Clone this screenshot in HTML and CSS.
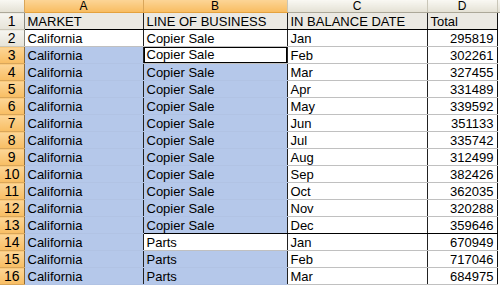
FILE: index.html
```html
<!DOCTYPE html>
<html lang="en">
<head>
    <meta charset="UTF-8">
    <title>Sheet</title>
    <link rel="stylesheet" href="styles.css">
</head>
<body>
    <table class="sheet">
        <colgroup>
            <col class="c-row">
            <col class="c-a">
            <col class="c-b">
            <col class="c-c">
            <col class="c-d">
            <col class="c-rest">
        </colgroup>
        <tr class="colhead">
            <th class="corner"></th>
            <th class="sel">A</th>
            <th class="sel">B</th>
            <th>C</th>
            <th>D</th>
            <th class="rest"></th>
        </tr>
        <tr class="title">
            <th class="rh">1</th>
            <td class="a">MARKET</td>
            <td class="b">LINE OF BUSINESS</td>
            <td class="c">IN BALANCE DATE</td>
            <td class="d txt">Total</td>
            <td class="rest"></td>
        </tr>
        <tr>
            <th class="rh">2</th>
            <td class="a">California</td>
            <td class="b">Copier Sale</td>
            <td class="c">Jan</td>
            <td class="d">295819</td>
            <td class="rest"></td>
        </tr>
        <tr>
            <th class="rh sel">3</th>
            <td class="a hi">California</td>
            <td class="b active"><span>Copier Sale</span></td>
            <td class="c">Feb</td>
            <td class="d">302261</td>
            <td class="rest"></td>
        </tr>
        <tr>
            <th class="rh sel">4</th>
            <td class="a hi">California</td>
            <td class="b hi">Copier Sale</td>
            <td class="c">Mar</td>
            <td class="d">327455</td>
            <td class="rest"></td>
        </tr>
        <tr>
            <th class="rh sel">5</th>
            <td class="a hi">California</td>
            <td class="b hi">Copier Sale</td>
            <td class="c">Apr</td>
            <td class="d">331489</td>
            <td class="rest"></td>
        </tr>
        <tr>
            <th class="rh sel">6</th>
            <td class="a hi">California</td>
            <td class="b hi">Copier Sale</td>
            <td class="c">May</td>
            <td class="d">339592</td>
            <td class="rest"></td>
        </tr>
        <tr>
            <th class="rh sel">7</th>
            <td class="a hi">California</td>
            <td class="b hi">Copier Sale</td>
            <td class="c">Jun</td>
            <td class="d">351133</td>
            <td class="rest"></td>
        </tr>
        <tr>
            <th class="rh sel">8</th>
            <td class="a hi">California</td>
            <td class="b hi">Copier Sale</td>
            <td class="c">Jul</td>
            <td class="d">335742</td>
            <td class="rest"></td>
        </tr>
        <tr>
            <th class="rh sel">9</th>
            <td class="a hi">California</td>
            <td class="b hi">Copier Sale</td>
            <td class="c">Aug</td>
            <td class="d">312499</td>
            <td class="rest"></td>
        </tr>
        <tr>
            <th class="rh sel">10</th>
            <td class="a hi">California</td>
            <td class="b hi">Copier Sale</td>
            <td class="c">Sep</td>
            <td class="d">382426</td>
            <td class="rest"></td>
        </tr>
        <tr>
            <th class="rh sel">11</th>
            <td class="a hi">California</td>
            <td class="b hi">Copier Sale</td>
            <td class="c">Oct</td>
            <td class="d">362035</td>
            <td class="rest"></td>
        </tr>
        <tr>
            <th class="rh sel">12</th>
            <td class="a hi">California</td>
            <td class="b hi">Copier Sale</td>
            <td class="c">Nov</td>
            <td class="d">320288</td>
            <td class="rest"></td>
        </tr>
        <tr class="group-end">
            <th class="rh sel">13</th>
            <td class="a hi">California</td>
            <td class="b hi">Copier Sale</td>
            <td class="c">Dec</td>
            <td class="d">359646</td>
            <td class="rest"></td>
        </tr>
        <tr>
            <th class="rh sel">14</th>
            <td class="a hi">California</td>
            <td class="b">Parts</td>
            <td class="c">Jan</td>
            <td class="d">670949</td>
            <td class="rest"></td>
        </tr>
        <tr>
            <th class="rh sel">15</th>
            <td class="a hi">California</td>
            <td class="b hi">Parts</td>
            <td class="c">Feb</td>
            <td class="d">717046</td>
            <td class="rest"></td>
        </tr>
        <tr>
            <th class="rh sel">16</th>
            <td class="a hi">California</td>
            <td class="b hi">Parts</td>
            <td class="c">Mar</td>
            <td class="d">684975</td>
            <td class="rest"></td>
        </tr>
    </table>
</body>
</html>
```

FILE: styles.css
```css
body{
    margin: 0;
    background: #fff;
    overflow: hidden;
}
.sheet{
    border-collapse: collapse;
    table-layout: fixed;
    width: 500px;
    font-family: "Liberation Sans", Arial, sans-serif;
    font-size: 13px;
    color: #000;
}
.c-row{ width: 24px; }
.c-a{ width: 119px; }
.c-b{ width: 144px; }
.c-c{ width: 140px; }
.c-d{ width: 70px; }
.c-rest{ width: 3px; }

.sheet th, .sheet td{
    padding: 0 3px;
    white-space: nowrap;
    overflow: hidden;
    line-height: 15px;
}

/* column letters */
.sheet .colhead th{
    height: 12px;
    font-size: 12px;
    line-height: 12px;
    font-weight: normal;
    text-align: center;
    overflow: visible;
    background: linear-gradient(#f9f8f3, #e4e1d5);
    border-left: 1px solid #c9c6b8;
    border-bottom: 1px solid #aca899;
    padding: 0;
}
.sheet .colhead th.sel{
    background: linear-gradient(#fcd596, #f8bd62);
    border-left-color: #d9a65a;
    border-bottom-color: #e5a23e;
}
.sheet .colhead th.corner{
    border-left: none;
}

/* row numbers */
.rh{
    height: 16px;
    font-size: 14px;
    font-weight: normal;
    text-align: center;
    background: linear-gradient(#f6f5f0, #e6e3d8);
    border-bottom: 1px solid #cbc7b8;
    border-right: 1px solid #8c8a80;
}
.rh.sel{
    background: linear-gradient(#fcd596, #f8bd62);
    border-bottom-color: #d9a65a;
    border-right-color: #8c6a3a;
}

/* cells */
.sheet td{
    height: 16px;
    border-bottom: 1px solid #c0c0c0;
    border-right: 1px solid #c0c0c0;
    background: #fff;
}
.sheet td.a, .sheet td.b, .sheet td.c{
    border-right-color: #222;
}
.sheet td.d{
    text-align: right;
    border-right-color: #111;
}
.sheet td.d.txt{
    text-align: left;
}
.sheet td.rest{
    border: none;
    padding: 0;
}
.sheet td.hi{
    background: #b5c8ea;
    border-bottom-color: #b1c3e4;
}
.sheet td.a.hi{
    border-right-color: #222;
}
.sheet td.active{
    padding: 0;
}
.sheet td.active span{
    display: block;
    height: 14px;
    line-height: 14px;
    padding: 0 2px;
    border: 1px solid #000;
}

.title td{
    background: #ebe9e3;
    border-bottom: 1px solid #000;
}
.title td.rest{
    background: #fff;
    border: none;
}

.group-end td.b, .group-end td.c, .group-end td.d{
    border-bottom: 1px solid #000;
}
```
